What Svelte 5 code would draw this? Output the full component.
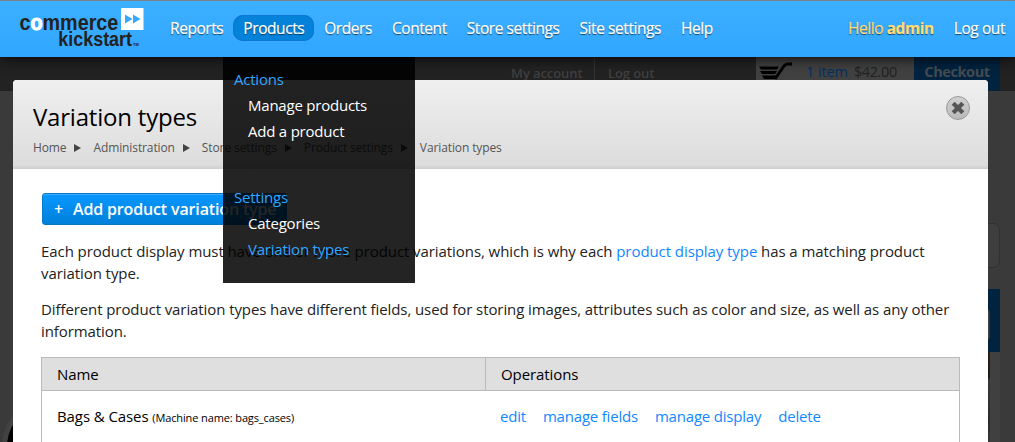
<script>
  const left = ['Reports', 'Products', 'Orders', 'Content', 'Store settings', 'Site settings', 'Help'];
  const crumbs = ['Home', 'Administration', 'Store settings', 'Product settings', 'Variation types'];
  const groups = [
    { title: 'Actions', items: ['Manage products', 'Add a product'] },
    { title: 'Settings', items: ['Categories', 'Variation types'] }
  ];
  const operations = ['edit', 'manage fields', 'manage display', 'delete'];
</script>

<div class="screen">
  <div class="store">
    <div class="store-top">
      <span class="account">My account</span>
      <span class="logout">Log out</span>
      <div class="cart">
        <svg class="cart-icon" width="36" height="22" viewBox="0 0 36 22">
          <path d="M1 4.500H21L19 7.500H3ZM2 9H19L17 12H4ZM4 13.500H18L17 17H6Z" />
          <path d="M17 17L26 4Q27.500 2 30 2H34" fill="none" stroke="#000" stroke-width="3" />
        </svg>
        <span class="count">1 item</span><span class="total">$42.00</span>
      </div>
      <div class="checkout">Checkout</div>
    </div>
    <div class="store-box"></div>
    <div class="store-panel"><i></i></div>
    <div class="store-column"><i></i></div>
    <div class="store-disc"></div>
  </div>

  <section class="modal">
    <header>
      <div class="heading">
        <h1>Variation types</h1>
        <nav class="crumbs">
          {#each crumbs as crumb, i}
            {#if i}<svg width="7" height="8" viewBox="0 0 7 8"><path d="M0 0L7 4L0 8Z" /></svg>{/if}
            <span>{crumb}</span>
          {/each}
        </nav>
      </div>
      <button class="close" aria-label="Close">
        <svg width="24" height="24" viewBox="0 0 24 24">
          <path d="M7.200 7.200L16.800 16.800M16.800 7.200L7.200 16.800" fill="none" stroke="#555" stroke-width="4.200" />
        </svg>
      </button>
    </header>
    <div class="body">
      <a class="add" href="#add"><span class="plus">+</span><span>Add product variation type</span></a>
      <p>Each product display must have one or more product variations, which is why each <a href="#type">product display type</a> has a matching product<br />variation type.</p>
      <p>Different product variation types have different fields, used for storing images, attributes such as color and size, as well as any other<br />information.</p>
      <div class="table">
        <div class="row head"><div>Name</div><div>Operations</div></div>
        <div class="row">
          <div>Bags &amp; Cases <small>(Machine name: bags_cases)</small></div>
          <div class="ops">{#each operations as op}<a href="#op">{op}</a>{/each}</div>
        </div>
      </div>
    </div>
  </section>

  <div class="toolbar">
    <svg class="logo" width="130" height="50" viewBox="0 0 130 50">
      <g font-family="Liberation Sans, Arial, sans-serif" font-weight="700" fill="#222">
        <text transform="translate(3.400 30) scale(.9 1)" font-size="22">c<tspan fill="#fff" stroke="#fff" stroke-width="1">o</tspan>mmerce</text>
        <text transform="translate(42.300 46.300) scale(.92 1)" font-size="19.500">kickstart</text>
        <text x="117" y="46" font-size="4">TM</text>
      </g>
      <path d="M105 8H127.500V30H105Z" fill="#fff" />
      <path d="M109 14.500L116.500 19L109 23.500ZM117 14.500L124.500 19L117 23.500Z" fill="#36aaff" />
    </svg>
    <nav class="menu">
      {#each left as item}
        <a class:active={item === 'Products'} href="#menu">{item}</a>
      {/each}
    </nav>
    <nav class="user">
      <a class="hello" href="#user">Hello <b>admin</b></a>
      <a href="#out">Log out</a>
    </nav>
  </div>

  <div class="dropdown">
    {#each groups as group}
      <div class="group">
        <h2>{group.title}</h2>
        {#each group.items as item}
          <a class:current={item === 'Variation types'} href="#item">{item}</a>
        {/each}
      </div>
    {/each}
  </div>
</div>

<style>
  .screen {
    position: relative;
    width: 1015px;
    height: 442px;
    overflow: hidden;
    background: #3a3a3a;
    font-family: 'Open Sans', sans-serif;
    font-size: 15px;
    letter-spacing: -0.09px;
    color: #222;
    white-space: nowrap;
  }
  a { color: inherit; text-decoration: none; }
  h1, h2, p { margin: 0; font-weight: 400; }

  .store { position: absolute; inset: 0; }
  .store-top {
    box-sizing: border-box;
    display: flex;
    height: 91px;
    padding-top: 57px;
    background: #222;
    font-size: 13px;
    font-weight: 600;
    line-height: 33px;
    color: #404040;
  }
  .account { box-sizing: border-box; width: 595px; padding-left: 511px; border-right: 1px solid #333; }
  .logout { width: 147px; padding-left: 13px; }
  .cart { box-sizing: border-box; display: flex; width: 158px; margin-left: 1px; padding-left: 2px; background: #414141; font-size: 14.5px; font-weight: 400; line-height: 30px; }
  .cart-icon { margin-top: 5px; }
  .count { margin-left: 12px; color: #052f62; }
  .total { margin-left: 6px; color: #222; letter-spacing: -0.4px; }
  .checkout { width: 86px; background: #00233f; text-align: center; font-size: 14.5px; font-weight: 700; line-height: 30px; color: #454b50; letter-spacing: -0.4px; }
  .store-box { position: absolute; left: 900px; top: 223px; width: 98px; height: 43px; border: 1px solid #303030; border-radius: 7px; background: #3e3e3e; }
  .store-panel { position: absolute; left: 900px; top: 289px; width: 100px; height: 63px; background: #002440; }
  .store-panel i { position: absolute; right: 10px; top: 20px; width: 20px; height: 29px; border: 1px solid #333; border-radius: 3px; background: #414141; }
  .store-column { position: absolute; left: 900px; top: 352px; width: 100px; height: 90px; background: #404040; }
  .store-column i { position: absolute; right: 10px; top: 0; width: 20px; height: 90px; background: linear-gradient(#29200d, #1f1c17 26px, #383838 28px, #2b2b2b 70px, #353535); }
  .store-disc { position: absolute; left: 2px; top: 398px; width: 88px; height: 88px; border: 5px solid #424242; border-radius: 50%; background: #000; }

  .modal {
    position: absolute;
    left: 13px;
    top: 80px;
    width: 975px;
    height: 380px;
    border-radius: 4px 4px 0 0;
    overflow: hidden;
    background: #fff;
  }
  .modal header {
    box-sizing: border-box;
    display: flex;
    justify-content: space-between;
    height: 89px;
    padding: 16px 18px 0 20px;
    background: linear-gradient(transparent 84px, #0000 85px, #00000012), linear-gradient(#efefef, #dcdcdc);
  }
  h1 { font-size: 24px; line-height: 42px; letter-spacing: -0.2px; color: #000; }
  .crumbs { display: flex; align-items: center; font-size: 12px; line-height: 20px; letter-spacing: -0.11px; color: #555; }
  .crumbs svg { margin: 0 12px 0 8px; fill: #444; }
  .close { box-sizing: border-box; width: 24px; height: 24px; padding: 0; border: 1px solid #999; border-radius: 50%; background: linear-gradient(#d0d0d0, #b9b9b9); }
  .close svg { display: block; margin: -1px; }

  .body { padding: 24px 28px 0; }
  .add {
    box-sizing: border-box;
    display: flex;
    gap: 10px;
    width: 245px;
    height: 32px;
    margin-left: 1px;
    padding-left: 11px;
    border: 1px solid #0878c9;
    border-radius: 3px;
    background: linear-gradient(#0898ff, #0080da);
    box-shadow: inset 0 1px #40aaff;
    color: #fff;
    font-size: 16px;
    font-weight: 600;
    line-height: 31px;
    letter-spacing: -0.15px;
  }
  p { margin-bottom: 14px; line-height: 22px; }
  .add + p { margin-top: 15px; letter-spacing: -0.073px; }
  p a, .ops a { color: #1287ff; }
  .table { box-sizing: border-box; width: 919px; height: 120px; margin-top: 15px; border: 1px solid #bbbbb5; color: #000; }
  .row { display: grid; grid-template-columns: 443px 1fr; height: 52px; line-height: 50px; }
  .row div { padding-left: 15px; }
  .head { height: 32px; line-height: 33px; border-bottom: 1px solid #bbbbb5; background: #dfdfdf; }
  .head div + div { border-left: 1px solid #bbbbb5; }
  small { font-size: 11px; letter-spacing: -0.12px; }
  .row .ops { display: flex; gap: 17px; padding-left: 15px; letter-spacing: -0.2px; }

  .toolbar {
    position: absolute;
    inset: 0 0 auto;
    box-sizing: border-box;
    display: flex;
    height: 57px;
    border-top: 1px solid #7b8288;
    background: linear-gradient(#3cb0ff, #31a6ff);
    box-shadow: 0 0 14px #000;
    color: #fff;
    font-size: 15.5px;
    font-weight: 500;
    line-height: 27px;
    letter-spacing: -0.43px;
    text-shadow: 0 1px 1px #0009;
    -webkit-text-stroke: 0.2px;
  }
  .logo { margin: -1px 0 0 16px; text-shadow: none; letter-spacing: 0; -webkit-text-stroke: 0; }
  .menu, .user { display: flex; padding-top: 14px; }
  .menu { margin-left: 14px; }
  .menu a, .user a { height: 26px; padding: 0 10px; }
  .menu .active { border-radius: 10px; background: #0481d8; box-shadow: inset 0 0 0 1px #0c76d4; }
  .user { margin-left: auto; }
  .user .hello { color: #ffdc79; }

  .dropdown {
    position: absolute;
    left: 223px;
    top: 57px;
    box-sizing: border-box;
    width: 192px;
    height: 226px;
    padding: 9px 11px 0;
    background: #000000db;
    color: #fff;
    line-height: 26px;
    letter-spacing: -0.22px;
  }
  .group { display: flex; flex-direction: column; margin-bottom: 40px; }
  .group a { padding-left: 14px; }
  h2, .group .current { color: #33a7ff; }
  h2 { font-size: 15px; font-weight: 500; }
</style>
